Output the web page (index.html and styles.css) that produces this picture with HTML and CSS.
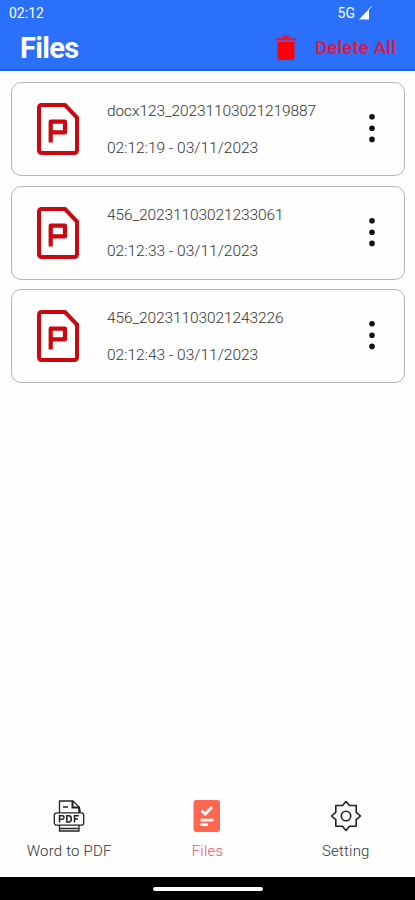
FILE: index.html
```html
<!DOCTYPE html>
<html lang="en">
<head>
<meta charset="utf-8">
<title>Files</title>
<link rel="stylesheet" href="styles.css">
</head>
<body>
<svg width="0" height="0" class="symbols">
  <symbol id="doc" viewBox="0 0 42 52">
    <path d="M5 2H28L40 14.5V47Q40 50 37 50H5Q2 50 2 47V5Q2 2 5 2Z" stroke-width="4"/>
    <path d="M13.7 39.5V18.7H28V29.3H13.7" stroke-width="4.2" stroke-linejoin="round"/>
  </symbol>
  <symbol id="dots" viewBox="0 0 8 30">
    <circle cx="4" cy="3.7" r="2.8"/><circle cx="4" cy="15.2" r="2.8"/><circle cx="4" cy="26.4" r="2.8"/>
  </symbol>
</svg>
<header class="header">
  <div class="status">
    <span class="clock">02:12</span>
    <span class="signal">5G <svg width="14" height="14" viewBox="0 0 14 14"><path d="M0 13.5L10 3V13.5Z" fill="#fff"/><path d="M9 4L13 0" stroke="#fff"/></svg></span>
  </div>
  <div class="bar">
    <h1 class="title">Files</h1>
    <button class="delete">
      <svg width="20" height="25" viewBox="0 0 20 25"><path d="M0 3.2H5.5L7 .5H13L14.5 3.2H20V5.6H0Z" fill="#df1740"/><path d="M1.5 7H18.5V22Q18.5 25 15.5 25H4.5Q1.5 25 1.5 22Z" fill="#fb0009"/></svg>
      <span>Delete All</span>
    </button>
  </div>
</header>
<main class="list">
  <article class="card">
    <svg class="doc"><use href="#doc"/></svg>
    <div class="info"><p class="name">docx123_20231103021219887</p><p class="date">02:12:19 - 03/11/2023</p></div>
    <svg class="dots"><use href="#dots"/></svg>
  </article>
  <article class="card">
    <svg class="doc"><use href="#doc"/></svg>
    <div class="info"><p class="name">456_20231103021233061</p><p class="date">02:12:33 - 03/11/2023</p></div>
    <svg class="dots"><use href="#dots"/></svg>
  </article>
  <article class="card">
    <svg class="doc"><use href="#doc"/></svg>
    <div class="info"><p class="name">456_20231103021243226</p><p class="date">02:12:43 - 03/11/2023</p></div>
    <svg class="dots"><use href="#dots"/></svg>
  </article>
</main>
<nav class="tabs">
  <a class="tab">
    <svg width="32" height="32" viewBox="0 0 32 32" fill="none" stroke="#222" stroke-width="1.3"><path d="M6.5 13V1H20L26 7V13M10 7H15"/><path d="M19.5 1V7.5H26L27 12" stroke-width="2"/><rect x="1.3" y="12.8" width="29.4" height="12.4" rx="2.5"/><path d="M6.5 25V31H26V25M6.5 28.5H26"/><path d="M6.5 22.5V15.8H9.5Q11 15.8 11 17.5T9.5 19.2H6.5M13.8 15.8V22H16Q18.3 22 18.3 19T16 15.8ZM21.5 22.5V15.8H26M21.5 19H25" stroke-width="1.5"/></svg>
    <span>Word to PDF</span>
  </a>
  <a class="tab active">
    <svg width="32" height="32" viewBox="0 0 32 32"><rect x="2.5" width="26.5" height="32" rx="3" fill="#ff6650"/><path d="M10.5 10.5L14.3 14L21 7" fill="none" stroke="#fff" stroke-width="2.8"/><path d="M9.5 20.2H22.5M9.5 24.7H17" stroke="#fff" stroke-width="2.8"/></svg>
    <span>Files</span>
  </a>
  <a class="tab">
    <svg width="32" height="32" viewBox="0 0 32 32" fill="none" stroke="#222" stroke-width="1.6" stroke-linejoin="round"><path d="M16 1.5L19.5 5.5H26.2V12.3L30.5 16L26.2 19.7V26.2H19.5L16 30.5L12.5 26.2H5.8V19.7L1.5 16L5.8 12.3V5.5H12.5Z"/><circle cx="16" cy="16" r="4.7"/></svg>
    <span>Setting</span>
  </a>
</nav>
<footer class="system"><div class="pill"></div></footer>
</body>
</html>
```
FILE: styles.css
```css
* { box-sizing: border-box; }
body {
  margin: 0;
  height: 900px;
  display: flex;
  flex-direction: column;
  overflow: hidden;
  background: #fefefe;
  font-family: Roboto, sans-serif;
  color: #333;
}
.symbols { position: absolute; }
.header {
  height: 71px;
  background: #2b70fa;
  border-bottom: 2px solid #1b60ee;
  color: #fff;
}
.status {
  height: 26px;
  padding: 0 42px 0 9px;
  display: flex;
  justify-content: space-between;
  align-items: center;
  font-size: 14px;
  font-weight: 400;
}
.signal { display: flex; align-items: center; gap: 4px; }
.bar {
  height: 43px;
  padding: 0 19px 0 20px;
  display: flex;
  justify-content: space-between;
  align-items: center;
}
.title { margin: 0; padding-top: 1px; font-size: 29px; font-weight: 700; line-height: 43px; letter-spacing: -.7px; }
.delete {
  display: flex;
  align-items: center;
  gap: 19px;
  padding: 0;
  border: 0;
  background: none;
  font: 500 19px/40px Roboto, sans-serif;
  color: #df1740;
}
.list {
  flex: 1;
  padding: 11px 10px 0 11px;
  display: flex;
  flex-direction: column;
  gap: 9.6px;
}
.card {
  height: 94px;
  padding: 0 28px 0 25px;
  display: flex;
  align-items: center;
  border: 1px solid #b5b5b5;
  border-radius: 10px;
}
.doc { width: 42px; height: 52px; fill: none; stroke: #cb0710; }
.info { flex: 1; margin-left: 28px; padding-top: 1px; }
.info p { margin: 0; font-size: 15.5px; font-weight: 300; line-height: 36.5px; white-space: nowrap; }
.info .name { letter-spacing: -.1px; }
.dots { width: 8px; height: 30px; margin-bottom: 2px; fill: #111; }
.tabs {
  height: 77px;
  display: grid;
  grid-template-columns: repeat(3, 1fr);
}
.tab {
  display: flex;
  flex-direction: column;
  align-items: center;
  gap: 9px;
  font-size: 15px;
  font-weight: 300;
  line-height: 20px;
  letter-spacing: .2px;
}
.active { color: #f0525a; }
.system {
  height: 23px;
  display: flex;
  justify-content: center;
  align-items: center;
  background: #000;
}
.pill { width: 110px; height: 4px; border-radius: 2px; background: #fff; }
```
